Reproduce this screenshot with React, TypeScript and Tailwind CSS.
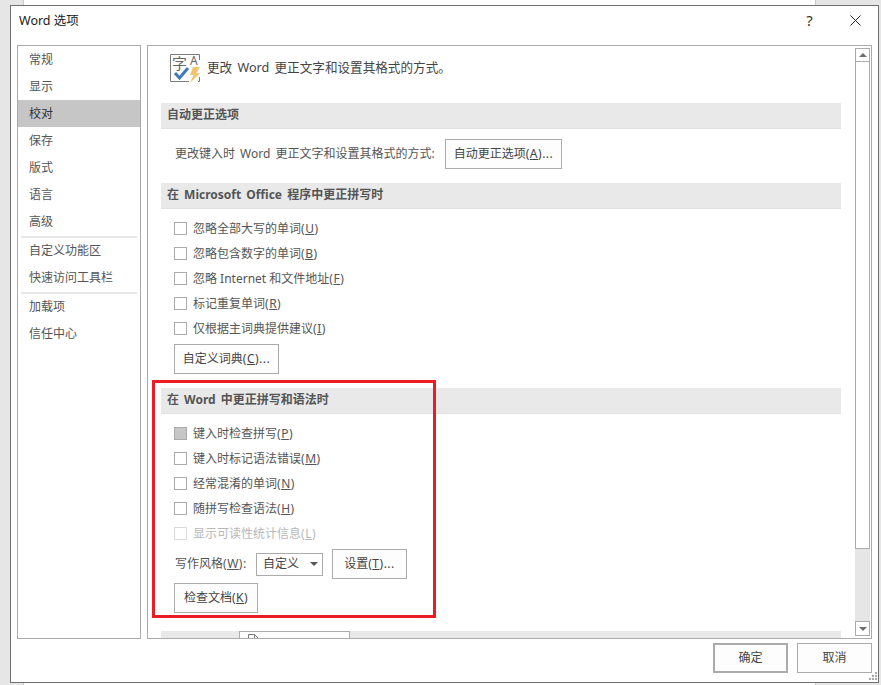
import type { ReactNode } from 'react'

const navGroups = [
  ['常规', '显示', '校对', '保存', '版式', '语言', '高级'],
  ['自定义功能区', '快速访问工具栏'],
  ['加载项', '信任中心'],
]

const spellingOptions = [
  { text: '忽略全部大写的单词', key: 'U' },
  { text: '忽略包含数字的单词', key: 'B' },
  { text: '忽略 Internet 和文件地址', key: 'F' },
  { text: '标记重复单词', key: 'R' },
  { text: '仅根据主词典提供建议', key: 'I' },
]

const grammarOptions = [
  { text: '键入时检查拼写', key: 'P', state: 'mixed' },
  { text: '键入时标记语法错误', key: 'M' },
  { text: '经常混淆的单词', key: 'N' },
  { text: '随拼写检查语法', key: 'H' },
  { text: '显示可读性统计信息', key: 'L', state: 'disabled' },
]

function Hotkey({ text, hotkey, suffix = '' }: { text: string; hotkey: string; suffix?: string }) {
  return (
    <span className="whitespace-nowrap">
      {text}
      <span className="tracking-[0.5px]">
        (<u>{hotkey}</u>){suffix}
      </span>
    </span>
  )
}

function Button({ className, children }: { className: string; children: ReactNode }) {
  return (
    <button
      type="button"
      className={`flex h-[30px] shrink-0 items-center justify-center border border-[#ababab] bg-[#fdfdfd] text-[12px] text-[#444] ${className}`}
    >
      {children}
    </button>
  )
}

function SectionHeader({ children }: { children: ReactNode }) {
  return (
    <div className="flex h-[26px] shrink-0 items-center border-b border-[#e1e1e1] bg-[#e9e9e9] pb-[1px] pl-[6px] text-[12px] font-bold text-[#555] [word-spacing:2px]">
      {children}
    </div>
  )
}

function CheckRow({ text, hotkey, state }: { text: string; hotkey: string; state?: string }) {
  const box =
    state === 'mixed'
      ? 'border-[#ababab] bg-[#c6c6c6]'
      : state === 'disabled'
        ? 'border-[#dadada] bg-white'
        : 'border-[#ababab] bg-white'
  return (
    <div className={`flex h-[25px] items-center gap-[6px] pl-[13px] text-[12px] ${state === 'disabled' ? 'text-[#b8b8b8]' : 'text-[#555]'}`}>
      <span className={`size-[13px] shrink-0 border ${box}`} />
      <Hotkey text={text} hotkey={hotkey} />
    </div>
  )
}

function ProofingIcon() {
  return (
    <svg width="31" height="29" viewBox="0 0 31 29" className="shrink-0">
      <path d="M.5 .5H29.500V6M.5 .5V27.500H19M29.500 23V27.500H28" fill="none" stroke="#7a7a7a" />
      <text x="2" y="15" fontSize="15" fill="#666" fontFamily="Noto Sans CJK SC, sans-serif">字</text>
      <text x="20" y="11" fontSize="12" fill="#666" fontFamily="Noto Sans, sans-serif">A</text>
      <path d="M5 19l4.500 5L18 14" fill="none" stroke="#3f7cb9" strokeWidth="3" />
      <path d="M23 13h7l-3.500 6H30l-10 10 3.500-8H20z" fill="#f2c46f" />
    </svg>
  )
}

function Scrollbar() {
  return (
    <div className="my-[2px] mr-[1px] flex w-[15px] shrink-0 flex-col bg-[#e6e6e6]">
      <div className="flex h-[14px] items-center justify-center border border-[#ababab] bg-white">
        <span className="size-0 border-x-[4px] border-b-[4px] border-x-transparent border-b-[#6e6e6e]" />
      </div>
      <div className="h-[487px] border border-t-0 border-[#ababab] bg-white" />
      <div className="mt-auto flex h-[15px] items-center justify-center border border-[#ababab] bg-white">
        <span className="size-0 border-x-[4px] border-t-[4px] border-x-transparent border-t-[#6e6e6e]" />
      </div>
    </div>
  )
}

export default function App() {
  return (
    <div className="relative h-[685px] w-[881px] overflow-hidden bg-[#e6e6e6] pl-[10px] pt-[5px] font-['Noto_Sans','Noto_Sans_CJK_SC',sans-serif]">
      {/* document page behind the dialog */}
      <div className="absolute left-[23px] top-0 h-[685px] w-[793px] border-x border-[#c8c8c8] bg-white" />

      <div className="relative flex h-[678px] w-[869px] flex-col border border-[#6f6f6f] bg-white">
        <div className="flex h-[39px] shrink-0 items-start justify-between pl-[8px]">
          <div className="pt-[6px] text-[12.500px] leading-[18px] text-[#222]">Word 选项</div>
          <div className="flex">
            <div className="flex h-[28px] w-[45px] items-center justify-center pt-[1px] text-[15px] text-[#333]">?</div>
            <div className="flex h-[28px] w-[46px] items-center justify-center">
              <svg width="11" height="11" viewBox="0 0 11 11">
                <path d="M.5.5l10 10M10.500.5l-10 10" stroke="#222" fill="none" />
              </svg>
            </div>
          </div>
        </div>

        <div className="flex h-[594px] shrink-0 gap-[6px] pl-[6px]">
          <nav className="w-[124px] shrink-0 border border-[#ababab] text-[12px] text-[#555]">
            {navGroups.map((group, index) => (
              <div key={group[0]}>
                {group.map(item => (
                  <div
                    key={item}
                    className={`flex h-[27px] items-center pl-[11px] ${item === '校对' ? 'bg-[#c6c6c6] text-[#333]' : ''}`}
                  >
                    {item}
                  </div>
                ))}
                {index < navGroups.length - 1 && <div className="mx-[3px] -mb-[1px] mt-[1px] h-[2px] bg-[#e6e6e6]" />}
              </div>
            ))}
          </nav>

          <div className="flex w-[725px] shrink-0 overflow-hidden border border-[#ababab]">
            <div className="flex min-w-0 flex-1 flex-col pl-[13px] pr-[14px] pt-[8px]">
              <div className="mb-[20px] flex h-[29px] shrink-0 items-center gap-[6px] pl-[9px] text-[12.600px] text-[#444] [word-spacing:2px]">
                <ProofingIcon />
                <span className="whitespace-nowrap">更改 Word 更正文字和设置其格式的方式。</span>
              </div>

              <SectionHeader>自动更正选项</SectionHeader>
              <div className="mt-[10px] flex items-center text-[12px] text-[#555]">
                <span className="w-[284px] whitespace-nowrap pl-[14px] [word-spacing:2px]">更改键入时 Word 更正文字和设置其格式的方式:</span>
                <Button className="w-[117px]">
                  <Hotkey text="自动更正选项" hotkey="A" suffix="..." />
                </Button>
              </div>

              <div className="mt-[14px]">
                <SectionHeader>在 Microsoft Office 程序中更正拼写时</SectionHeader>
              </div>
              <div className="mt-[7px]">
                {spellingOptions.map(option => (
                  <CheckRow key={option.key} text={option.text} hotkey={option.key} />
                ))}
              </div>
              <Button className="ml-[13px] mt-[3px] w-[105px]">
                <Hotkey text="自定义词典" hotkey="C" suffix="..." />
              </Button>

              <div className="mt-[14px]">
                <SectionHeader>在 Word 中更正拼写和语法时</SectionHeader>
              </div>
              <div className="mt-[7px]">
                {grammarOptions.map(option => (
                  <CheckRow key={option.key} text={option.text} hotkey={option.key} state={option.state} />
                ))}
              </div>
              <div className="mt-[3px] flex items-center pl-[14px] text-[12px] text-[#555]">
                <span className="w-[81px]">
                  <Hotkey text="写作风格" hotkey="W" suffix=":" />
                </span>
                <div className="flex h-[23px] w-[67px] items-center justify-between border border-[#ababab] bg-white pl-[6px] pr-[4px] text-[#444]">
                  自定义
                  <span className="size-0 border-x-[4px] border-t-[4px] border-x-transparent border-t-[#555]" />
                </div>
                <Button className="ml-[9px] w-[75px]">
                  <Hotkey text="设置" hotkey="T" suffix="..." />
                </Button>
              </div>
              <Button className="ml-[13px] mt-[4px] w-[84px]">
                <Hotkey text="检查文档" hotkey="K" />
              </Button>

              <div className="mt-[18px] flex h-[26px] shrink-0 items-start bg-[#e9e9e9] pl-[6px] text-[12px] font-bold text-[#555]">
                <span className="w-[72px] pt-[5px]">
                  <Hotkey text="例外项" hotkey="X" suffix=":" />
                </span>
                <div className="flex h-[30px] w-[111px] shrink-0 items-start gap-[5px] border border-[#ababab] bg-[#fdfdfd] pl-[8px] pt-[2px] font-normal text-[#444]">
                  <svg width="11" height="13" viewBox="0 0 11 13" className="shrink-0">
                    <path d="M.5.5h6l4 4v8H.5zM6.500.5v4h4" fill="#fff" stroke="#7a7a7a" />
                  </svg>
                  <span className="pt-[2px]">文档1</span>
                </div>
              </div>
            </div>
            <Scrollbar />
          </div>
        </div>

        <div className="flex justify-end gap-[9px] pr-[6px] pt-[4px]">
          <Button className="w-[75px] border-2">确定</Button>
          <Button className="w-[75px]">取消</Button>
        </div>

        <svg width="8" height="8" viewBox="0 0 8 8" className="absolute bottom-[2px] right-[1px]" fill="#a8a8a8">
          <path d="M6 0h2v2H6zM3 3h2v2H3zM6 3h2v2H6zM0 6h2v2H0zM3 6h2v2H3zM6 6h2v2H6z" />
        </svg>
      </div>

      {/* annotation drawn over the screenshot */}
      <div className="absolute left-[152px] top-[380px] h-[238px] w-[284px] border-[3px] border-[#ed1c24]" />
    </div>
  )
}
